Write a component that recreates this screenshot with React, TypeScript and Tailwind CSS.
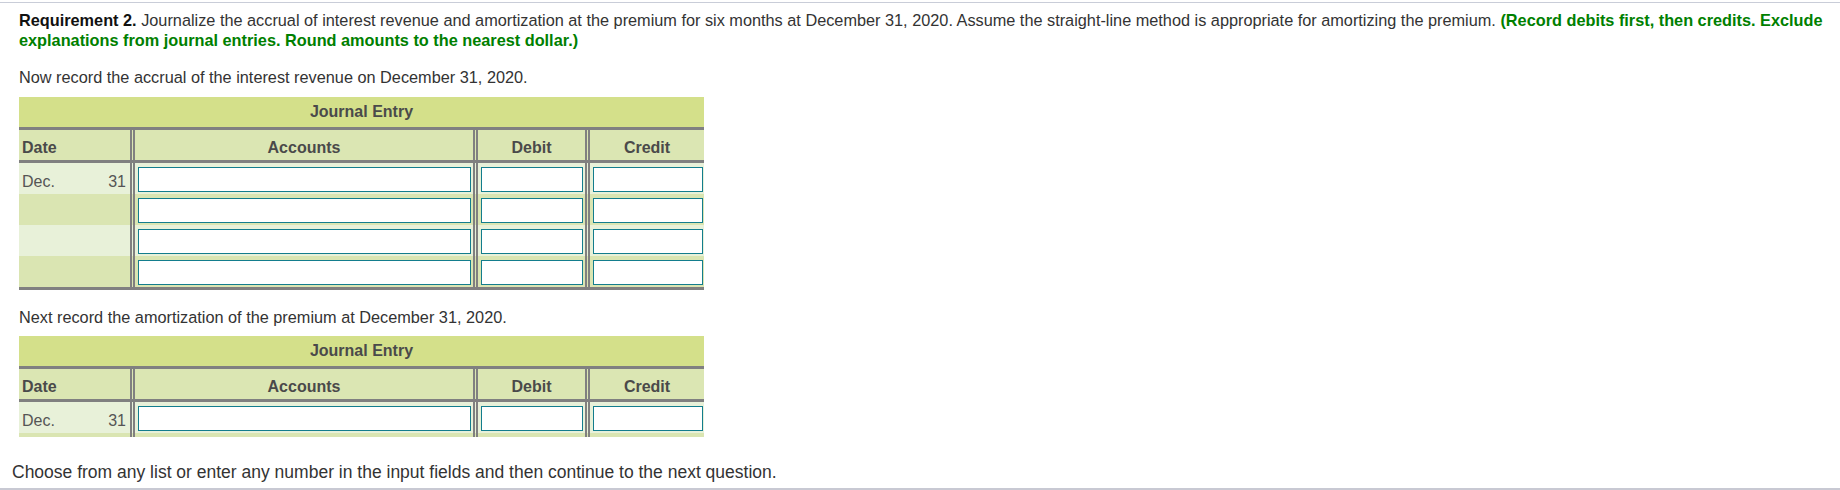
import React from 'react';

const rowBg = ['bg-[#e8f1d9]', 'bg-[#dae5b2]'];

// double vertical rule between columns
const Divider: React.FC = () => (
  <div className="w-[5px] shrink-0 border-x-2 border-[#808080]" />
);

const InputCell: React.FC<{ width: string; pad: string }> = ({ width, pad }) => (
  <div className={`${width} ${pad} shrink-0 pt-[4px] pb-[2px]`}>
    <input type="text" className="block w-full h-[25px] border border-[#137d8d] bg-white outline-none" />
  </div>
);

const JournalTable: React.FC<{ rows: number }> = ({ rows }) => (
  <div className="w-[685px] text-[16px]">
    {/* title band */}
    <div className="h-[30px] bg-[#d4e08a] flex items-center justify-center font-bold text-[#4a4a4a]">
      Journal Entry
    </div>
    <div className="h-[3px] bg-[#808080]" />

    {/* column headers */}
    <div className="flex h-[30px] bg-[#dbe6b3] font-bold text-[#4a4a4a]">
      <div className="w-[111px] shrink-0 pl-[3px] pt-[8px]">Date</div>
      <Divider />
      <div className="w-[338px] shrink-0 text-center pt-[8px]">Accounts</div>
      <Divider />
      <div className="w-[107px] shrink-0 text-center pt-[8px]">Debit</div>
      <Divider />
      <div className="w-[114px] shrink-0 text-center pt-[8px]">Credit</div>
    </div>
    <div className="h-[3px] bg-[#808080]" />

    {/* entry rows */}
    {Array.from({ length: rows }).map((_, i) => (
      <div key={i} className={`flex h-[31px] ${rowBg[i % 2]}`}>
        <div className="w-[111px] shrink-0 flex justify-between items-start pl-[3px] pr-[4px] pt-[9px] text-[#555]">
          {i === 0 && (
            <>
              <span>Dec.</span>
              <span>31</span>
            </>
          )}
        </div>
        <Divider />
        <InputCell width="w-[338px]" pad="pl-[3px] pr-[2px]" />
        <Divider />
        <InputCell width="w-[107px]" pad="pl-[3px] pr-[2px]" />
        <Divider />
        <InputCell width="w-[114px]" pad="pl-[3px] pr-[1px]" />
      </div>
    ))}
    <div className="h-[3px] bg-[#808080]" />
  </div>
);

const App: React.FC = () => {
  return (
    <div className="w-[1840px] h-[490px] bg-white overflow-hidden font-['Liberation_Sans',Arial,sans-serif] text-[16.3px] leading-[20px] text-[#333]">
      <div className="mt-[2px] h-px bg-[#c9cdd8]" />

      <div className="px-[19px]">
        {/* requirement text */}
        <p className="mt-[7px] whitespace-nowrap">
          <span className="font-bold text-[#111]">Requirement 2.</span> Journalize the accrual of interest revenue and amortization at the premium for six months at December 31, 2020. Assume the straight-line method is appropriate for amortizing the premium.{' '}
          <span className="font-bold text-[#008000]">(Record debits first, then credits. Exclude</span>
          <br />
          <span className="font-bold text-[#008000]">explanations from journal entries. Round amounts to the nearest dollar.)</span>
        </p>

        <p className="mt-[17px]">Now record the accrual of the interest revenue on December 31, 2020.</p>

        <div className="mt-[10px]">
          <JournalTable rows={4} />
        </div>

        <p className="mt-[17px]">Next record the amortization of the premium at December 31, 2020.</p>

        {/* second table is cut off by the scroll area */}
        <div className="mt-[9px] h-[101px] overflow-hidden">
          <JournalTable rows={2} />
        </div>
      </div>

      <p className="mt-[25px] ml-[12px] text-[17.5px]">
        Choose from any list or enter any number in the input fields and then continue to the next question.
      </p>
      <div className="mt-[6px] h-[2px] bg-[#c8c9d3]" />
    </div>
  );
};

export default App;
